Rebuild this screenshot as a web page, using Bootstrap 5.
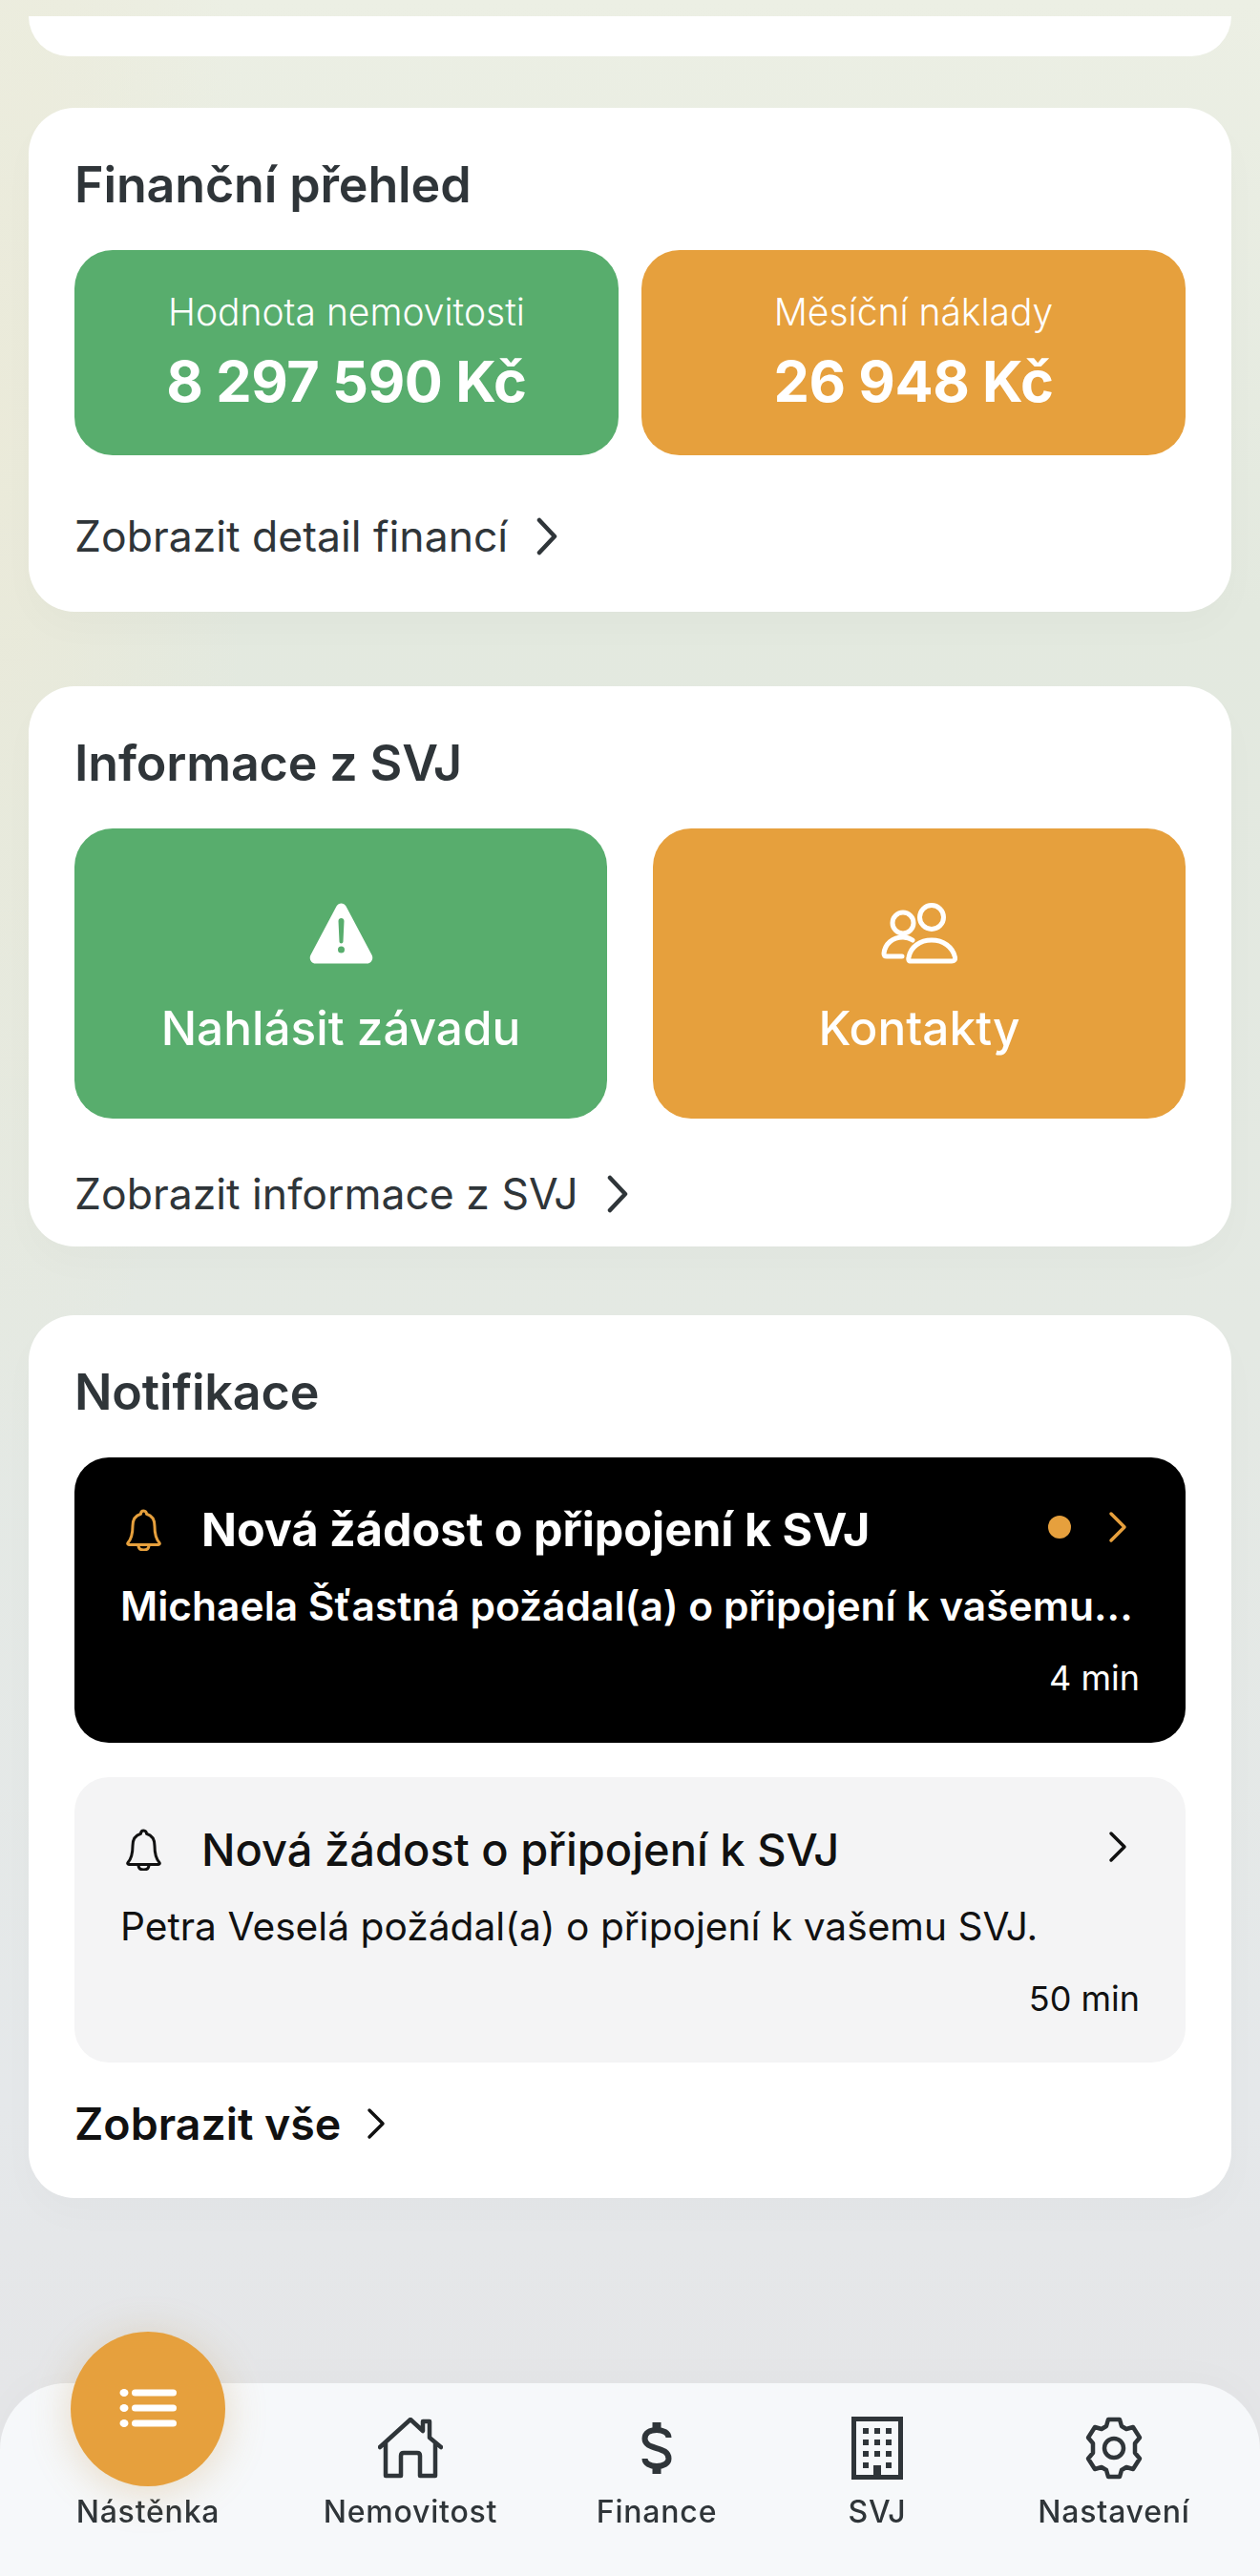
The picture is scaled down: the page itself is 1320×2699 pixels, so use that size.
<!DOCTYPE html>
<html lang="cs">
<head>
  <meta charset="UTF-8" />
  <meta name="viewport" content="width=device-width, initial-scale=1.0"/>
  <title>Nástěnka</title>
  <link href="https://cdn.jsdelivr.net/npm/bootstrap@5.3.0/dist/css/bootstrap.min.css" rel="stylesheet">
  <style>
    body {
      font-family: Inter, "Liberation Sans", sans-serif;
      color: #2f3539;
      min-height: 2699px;
      background:
        radial-gradient(ellipse 260px 1100px at 0 450px, rgba(236,234,216,.8), rgba(236,234,216,0)),
        linear-gradient(180deg, #ecefe4 0, #e3e9df 640px, #e4e9e3 1400px, #e5e8ea 2200px, #e5e6e8 2500px);
      padding: 17px 30px 0;
    }
    .panel {
      border: 0;
      border-radius: 48px;
      background: #fff;
      padding: 49px 48px 0;
      box-shadow: 0 18px 40px rgba(0,0,0,.02);
    }
    .panel-top { border-radius: 0 0 48px 48px; height: 42px; padding: 0; box-shadow: none; }
    .panel-fin { margin-top: 54px; height: 528px; }
    .panel-svj { margin-top: 78px; height: 587px; }
    .panel-not { margin-top: 72px; height: 925px; }
    .panel-title { font-size: 52px; line-height: 62px; font-weight: 600; margin: 0 0 38px; letter-spacing: -.15px; position: relative; top: 1px; }
    .tile { border-radius: 40px; color: #fff; text-align: center; flex: 1 1 0; }
    .tile-green { background: #58ad6d; }
    .tile-orange { background: #e6a03d; }
    .tile-sum { height: 215px; padding-top: 41px; }
    .tile-label { font-size: 39px; line-height: 48px; font-weight: 300; }
    .tile-value { font-size: 59.4px; line-height: 72px; font-weight: 700; letter-spacing: -.4px; margin-top: 12px; }
    .tile-act { height: 304px; padding-top: 78px; }
    .tile-act svg { display: block; margin: 0 auto; }
    .tile-name { font-size: 49.500px; line-height: 60px; font-weight: 500; margin-top: 37px; }
    .more { font-size: 44.500px; line-height: 54px; color: #2f3539; text-decoration: none; gap: 28px; }
    .more-fin { margin-top: 58px; }
    .more-svj { margin-top: 52px; }
    .more-not { margin-top: 37px; font-size: 46.500px; font-weight: 600; color: #111; gap: 26px; }
    .note { border-radius: 36px; padding: 48px 48px 46px; height: 299px; }
    .note + .note { margin-top: 36px; }
    .note-new { background: #000; color: #fff; }
    .note-old { background: #f4f4f5; color: #111; }
    .note-bell { width: 37px; flex: none; margin: 0 42px 0 6px; }
    .note-title { font-size: 48.500px; line-height: 56px; flex-grow: 1; }
    .note-new .note-title { font-weight: 700; }
    .note-old .note-title { font-weight: 500; font-size: 47px; }
    .note-dot { width: 24px; height: 24px; border-radius: 50%; background: #e6a03d; margin: 0 39px 6px 0; flex: none; }
    .note-arrow { margin: 0 13px 6px 0; flex: none; }
    .note-text { font-size: 40.700px; line-height: 52px; margin-top: 26px; white-space: nowrap; }
    .note-new .note-text { font-weight: 600; font-size: 42.500px; }
    .note-old .note-text { padding-top: 1px; }
    .note-time { font-size: 36px; line-height: 44px; margin-top: 27px; text-align: right; }
    .tabbar {
      height: 202px;
      background: #f6f8fa;
      border-radius: 70px 70px 0 0;
      padding: 33px 30px 0 32px;
      display: grid;
      grid-template-columns: 246px 304px 212px 250px 246px;
      box-shadow: 0 -8px 40px rgba(0,0,0,.02);
    }
    .tab { text-align: center; color: #2f3539; text-decoration: none; font-size: 32px; line-height: 40px; position: relative; letter-spacing: .8px; font-weight: 500; }
    .tab-icon { height: 70px; margin-bottom: 12px; display: flex; align-items: center; justify-content: center; }
    .tab-active {
      position: absolute;
      left: 42px;
      top: -87px;
      width: 162px;
      height: 162px;
      border-radius: 50%;
      background: #e6a03d;
      display: flex;
      align-items: center;
      justify-content: center;
      box-shadow: 0 6px 44px rgba(190,140,60,.28);
    }
    .tab-spacer { height: 70px; margin-bottom: 12px; }
  </style>
</head>
<body>
  <div class="card panel panel-top"></div>

  <div class="card panel panel-fin">
    <h2 class="panel-title">Finanční přehled</h2>
    <div class="d-flex gap-4">
      <div class="tile tile-green tile-sum">
        <div class="tile-label">Hodnota nemovitosti</div>
        <div class="tile-value">8 297 590 Kč</div>
      </div>
      <div class="tile tile-orange tile-sum">
        <div class="tile-label">Měsíční náklady</div>
        <div class="tile-value">26 948 Kč</div>
      </div>
    </div>
    <a href="#" class="more more-fin d-flex align-items-center">Zobrazit detail financí
      <svg width="26" height="40" viewBox="0 0 26 40" fill="none" stroke="#2f3539" stroke-width="4.500" stroke-linecap="round" stroke-linejoin="round"><path d="M5 3l16 17L5 37"/></svg>
    </a>
  </div>

  <div class="card panel panel-svj">
    <h2 class="panel-title">Informace z SVJ</h2>
    <div class="d-flex gap-5">
      <div class="tile tile-green tile-act">
        <svg width="67" height="64" viewBox="0 0 67 64"><path fill="#fff" fill-rule="evenodd" d="M28.500 3.500c2.300-4 7.700-4 10 0l27 51c2.200 4-.6 9-5 9H6.500c-4.400 0-7.200-5-5-9zM30.500 19c0-1.700 1.300-3 3-3s3 1.300 3 3l-1 21.500c0 1.100-.9 2-2 2s-2-.9-2-2zM33.500 45.500a3.500 3.500 0 1 1 0 7 3.500 3.500 0 0 1 0-7z"/></svg>
        <div class="tile-name">Nahlásit závadu</div>
      </div>
      <div class="tile tile-orange tile-act">
        <svg width="80" height="64" viewBox="0 0 80 64" fill="none" stroke="#fff" stroke-width="5" stroke-linecap="round" stroke-linejoin="round"><ellipse cx="53" cy="15" rx="12.500" ry="12.500"/><circle cx="23" cy="21" r="11"/><path d="M30 61h44c3 0 4-2 3.500-4C75 46 65 39 53 39s-22 7-24 18c-.5 2 0 4 1 4zM33 39c-3-2-6-3-10-3C12 36 4 43 3 53c0 2 1 3 3 3h16"/></svg>
        <div class="tile-name">Kontakty</div>
      </div>
    </div>
    <a href="#" class="more more-svj d-flex align-items-center">Zobrazit informace z SVJ
      <svg width="26" height="40" viewBox="0 0 26 40" fill="none" stroke="#2f3539" stroke-width="4.500" stroke-linecap="round" stroke-linejoin="round"><path d="M5 3l16 17L5 37"/></svg>
    </a>
  </div>

  <div class="card panel panel-not">
    <h2 class="panel-title">Notifikace</h2>
    <div class="note note-new">
      <div class="d-flex align-items-center">
        <svg class="note-bell" height="44" viewBox="0 0 37 44" fill="none" stroke="#e6a03d" stroke-width="3" stroke-linecap="round" stroke-linejoin="round"><path d="M18.500 2c-2 0-3 1.500-3 3.300C9.500 7 7 12 7 18c0 8-1 13-5 17.500-.7 1 0 2 1 2h31c1 0 1.700-1 1-2-4-4.500-5-9.500-5-17.500 0-6-2.500-11-8.500-12.700 0-1.800-1-3.300-3-3.300zM13 38c0 3.500 2.500 5 5.500 5s5.500-1.500 5.500-5"/></svg>
        <div class="note-title">Nová žádost o připojení k SVJ</div>
        <span class="note-dot"></span>
        <svg class="note-arrow" width="20" height="34" viewBox="0 0 20 34" fill="none" stroke="#e6a03d" stroke-width="3.500" stroke-linecap="round" stroke-linejoin="round"><path d="M3 3l14 14L3 31"/></svg>
      </div>
      <div class="note-text">Michaela Šťastná požádal(a) o připojení k vašemu...</div>
      <div class="note-time">4 min</div>
    </div>
    <div class="note note-old">
      <div class="d-flex align-items-center">
        <svg class="note-bell" height="44" viewBox="0 0 37 44" fill="none" stroke="#111" stroke-width="3" stroke-linecap="round" stroke-linejoin="round"><path d="M18.500 2c-2 0-3 1.500-3 3.300C9.500 7 7 12 7 18c0 8-1 13-5 17.500-.7 1 0 2 1 2h31c1 0 1.700-1 1-2-4-4.500-5-9.500-5-17.500 0-6-2.500-11-8.500-12.700 0-1.800-1-3.300-3-3.300zM13 38c0 3.500 2.500 5 5.500 5s5.500-1.500 5.500-5"/></svg>
        <div class="note-title">Nová žádost o připojení k SVJ</div>
        <svg class="note-arrow" width="20" height="34" viewBox="0 0 20 34" fill="none" stroke="#111" stroke-width="3.500" stroke-linecap="round" stroke-linejoin="round"><path d="M3 3l14 14L3 31"/></svg>
      </div>
      <div class="note-text">Petra Veselá požádal(a) o připojení k vašemu SVJ.</div>
      <div class="note-time">50 min</div>
    </div>
    <a href="#" class="more more-not d-flex align-items-center">Zobrazit vše
      <svg width="22" height="34" viewBox="0 0 22 34" fill="none" stroke="#111" stroke-width="3.500" stroke-linecap="round" stroke-linejoin="round"><path d="M4 3l14 14L4 31"/></svg>
    </a>
  </div>

  <nav class="tabbar fixed-bottom">
    <a href="#" class="tab">
      <div class="tab-active">
        <svg width="60" height="50" viewBox="0 0 60 50" fill="#fff"><ellipse cx="5" cy="8" rx="4.500" ry="4"/><ellipse cx="5" cy="24" rx="4.500" ry="4"/><ellipse cx="5" cy="40" rx="4.500" ry="4"/><rect x="13" y="4.500" width="47" height="7" rx="3.500"/><rect x="13" y="20.500" width="47" height="7" rx="3.500"/><rect x="13" y="36.500" width="47" height="7" rx="3.500"/></svg>
      </div>
      <div class="tab-spacer"></div>
      Nástěnka
    </a>
    <a href="#" class="tab">
      <div class="tab-icon">
        <svg width="68" height="64" viewBox="0 0 68 64" fill="none" stroke="#2f3539" stroke-width="4.500" stroke-linecap="round" stroke-linejoin="round"><path d="M2 31L34 2l13 12V4h7v17l12 10M8 26v35h16V40c0-2 1-3 3-3h14c2 0 3 1 3 3v21h16V26"/></svg>
      </div>
      Nemovitost
    </a>
    <a href="#" class="tab">
      <div class="tab-icon">
        <svg width="32" height="56" viewBox="0 0 32 56" fill="none" stroke="#2f3539" stroke-width="6"><path d="M28.500 17c0-5-5.500-8-12.500-8S3.500 12 3.500 18c0 13 25 7 25 21 0 5-5.500 8-12.500 8S3.500 44 3.500 39"/><path d="M16 1v9M16 46v9" stroke-width="9"/></svg>
      </div>
      Finance
    </a>
    <a href="#" class="tab">
      <div class="tab-icon">
        <svg width="54" height="66" viewBox="0 0 54 66"><path fill="#2f3539" fill-rule="evenodd" d="M0 0h54v66H0zM5 5v56h18V51h8v10h18V5z"/><path fill="#2f3539" d="M12 12h6v6h-6zM24 12h6v6h-6zM36 12h6v6h-6zM12 24h6v6h-6zM24 24h6v6h-6zM36 24h6v6h-6zM12 36h6v6h-6zM24 36h6v6h-6zM36 36h6v6h-6zM12 48h6v6h-6zM36 48h6v6h-6z"/></svg>
      </div>
      SVJ
    </a>
    <a href="#" class="tab">
      <div class="tab-icon">
        <svg width="64" height="66" viewBox="0 0 64 66" fill="none" stroke="#2f3539" stroke-width="4.500" stroke-linejoin="round"><circle cx="32" cy="33" r="10"/><path d="M26 3h12l2 7 5 3 7-2 7 11-5 6v10l5 6-7 11-7-2-5 3-2 7H26l-2-7-5-3-7 2-7-11 5-6V28l-5-6 7-11 7 2 5-3z"/></svg>
      </div>
      Nastavení
    </a>
  </nav>

  <script src="https://cdn.jsdelivr.net/npm/bootstrap@5.3.0/dist/js/bootstrap.bundle.min.js"></script>
</body>
</html>
